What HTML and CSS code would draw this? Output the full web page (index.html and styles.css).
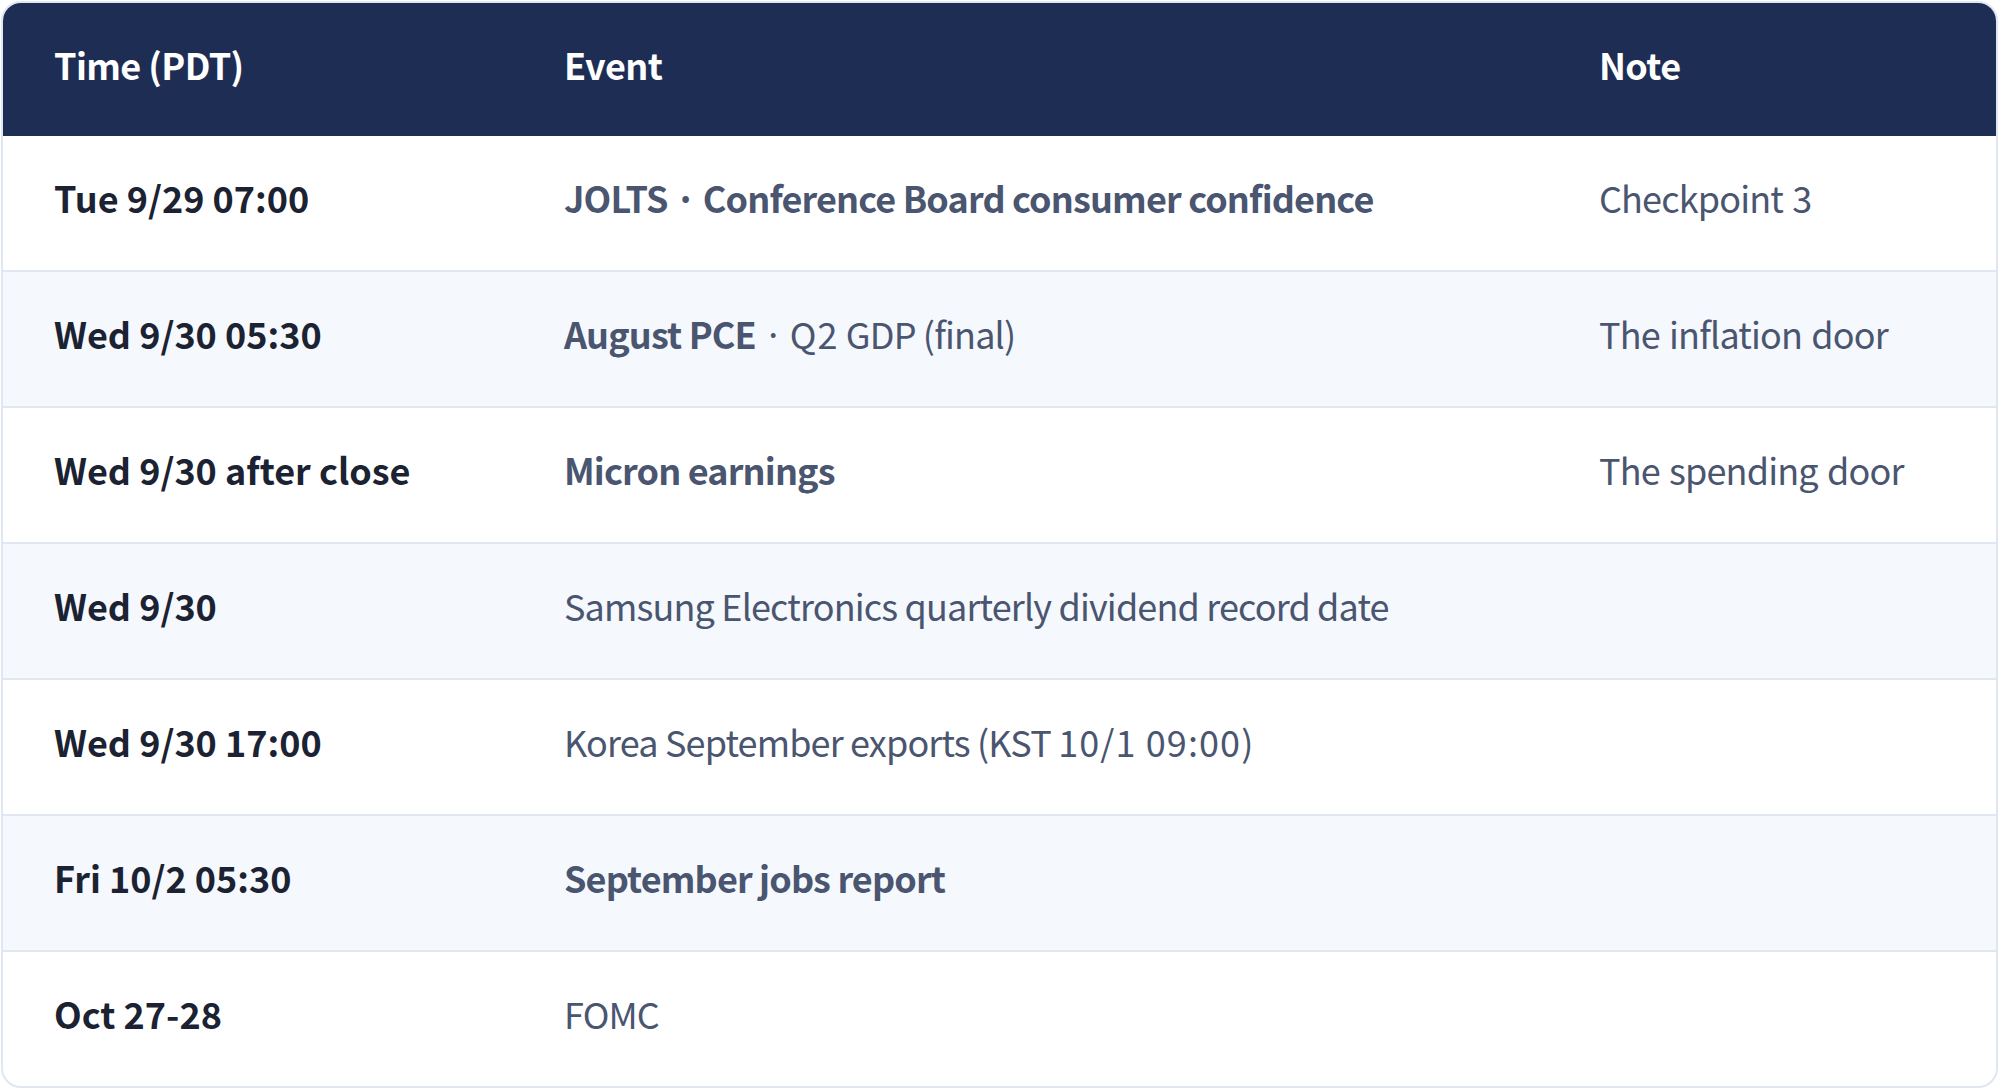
FILE: index.html
```html
<!DOCTYPE html>
<html lang="en">
<head>
<meta charset="utf-8">
<title>Schedule</title>
<link rel="stylesheet" href="styles.css">
</head>
<body>
<div class="card">
  <table class="schedule">
    <colgroup>
      <col class="col-time">
      <col class="col-event">
      <col class="col-note">
    </colgroup>
    <thead>
      <tr>
        <th>Time (PDT)</th>
        <th>Event</th>
        <th>Note</th>
      </tr>
    </thead>
    <tbody>
      <tr>
        <td class="time">Tue 9/29 07:00</td>
        <td class="event"><strong>JOLTS · Conference Board consumer confidence</strong></td>
        <td class="note">Checkpoint 3</td>
      </tr>
      <tr>
        <td class="time">Wed 9/30 05:30</td>
        <td class="event"><strong>August PCE</strong> · <span class="num">Q2</span> GDP (final)</td>
        <td class="note">The inflation door</td>
      </tr>
      <tr>
        <td class="time">Wed 9/30 after close</td>
        <td class="event"><strong>Micron earnings</strong></td>
        <td class="note">The spending door</td>
      </tr>
      <tr>
        <td class="time">Wed 9/30</td>
        <td class="event">Samsung Electronics quarterly dividend record date</td>
        <td class="note"></td>
      </tr>
      <tr>
        <td class="time">Wed 9/30 17:00</td>
        <td class="event">Korea September exports (KST <span class="num">10/1 09:00</span>)</td>
        <td class="note"></td>
      </tr>
      <tr>
        <td class="time">Fri 10/2 05:30</td>
        <td class="event"><strong>September jobs report</strong></td>
        <td class="note"></td>
      </tr>
      <tr>
        <td class="time">Oct 27-28</td>
        <td class="event">FOMC</td>
        <td class="note"></td>
      </tr>
    </tbody>
  </table>
</div>
</body>
</html>
```

FILE: styles.css
```css
html, body {
  margin: 0;
  padding: 0;
  background: #ffffff;
}

body {
  font-family: "Noto Sans CJK KR", "Noto Sans", sans-serif;
  font-size: 36px;
  line-height: 54px;
  letter-spacing: -0.85px;
}

.card {
  margin: 1px 2px 0 1px;
  border: 2px solid #e0e7f1;
  border-radius: 20px;
  overflow: hidden;
  background: #ffffff;
}

.schedule {
  width: 100%;
  border-collapse: separate;
  border-spacing: 0;
  table-layout: fixed;
}

.col-time { width: 510px; }
.col-event { width: 1035px; }

.schedule th {
  background: #1e2d54;
  color: #ffffff;
  font-weight: 700;
  text-align: left;
  letter-spacing: -0.6px;
  padding: 34px 20px 45px 51px;
}

.schedule td {
  padding: 34px 20px 46px 51px;
  border-bottom: 2px solid #e0e7f1;
  text-align: left;
  vertical-align: middle;
  white-space: nowrap;
}

.schedule tbody tr:nth-child(even) td {
  background: #f5f8fd;
}

.schedule tbody tr:last-child td {
  border-bottom: none;
}

.time {
  color: #1b2232;
  font-weight: 700;
  letter-spacing: 0;
}

.event {
  color: #4a5570;
  font-weight: 400;
}

.event strong {
  font-weight: 700;
}

.num {
  letter-spacing: 1.1px;
}

.note {
  color: #4a5570;
  font-weight: 400;
  word-spacing: 2px;
}
```
